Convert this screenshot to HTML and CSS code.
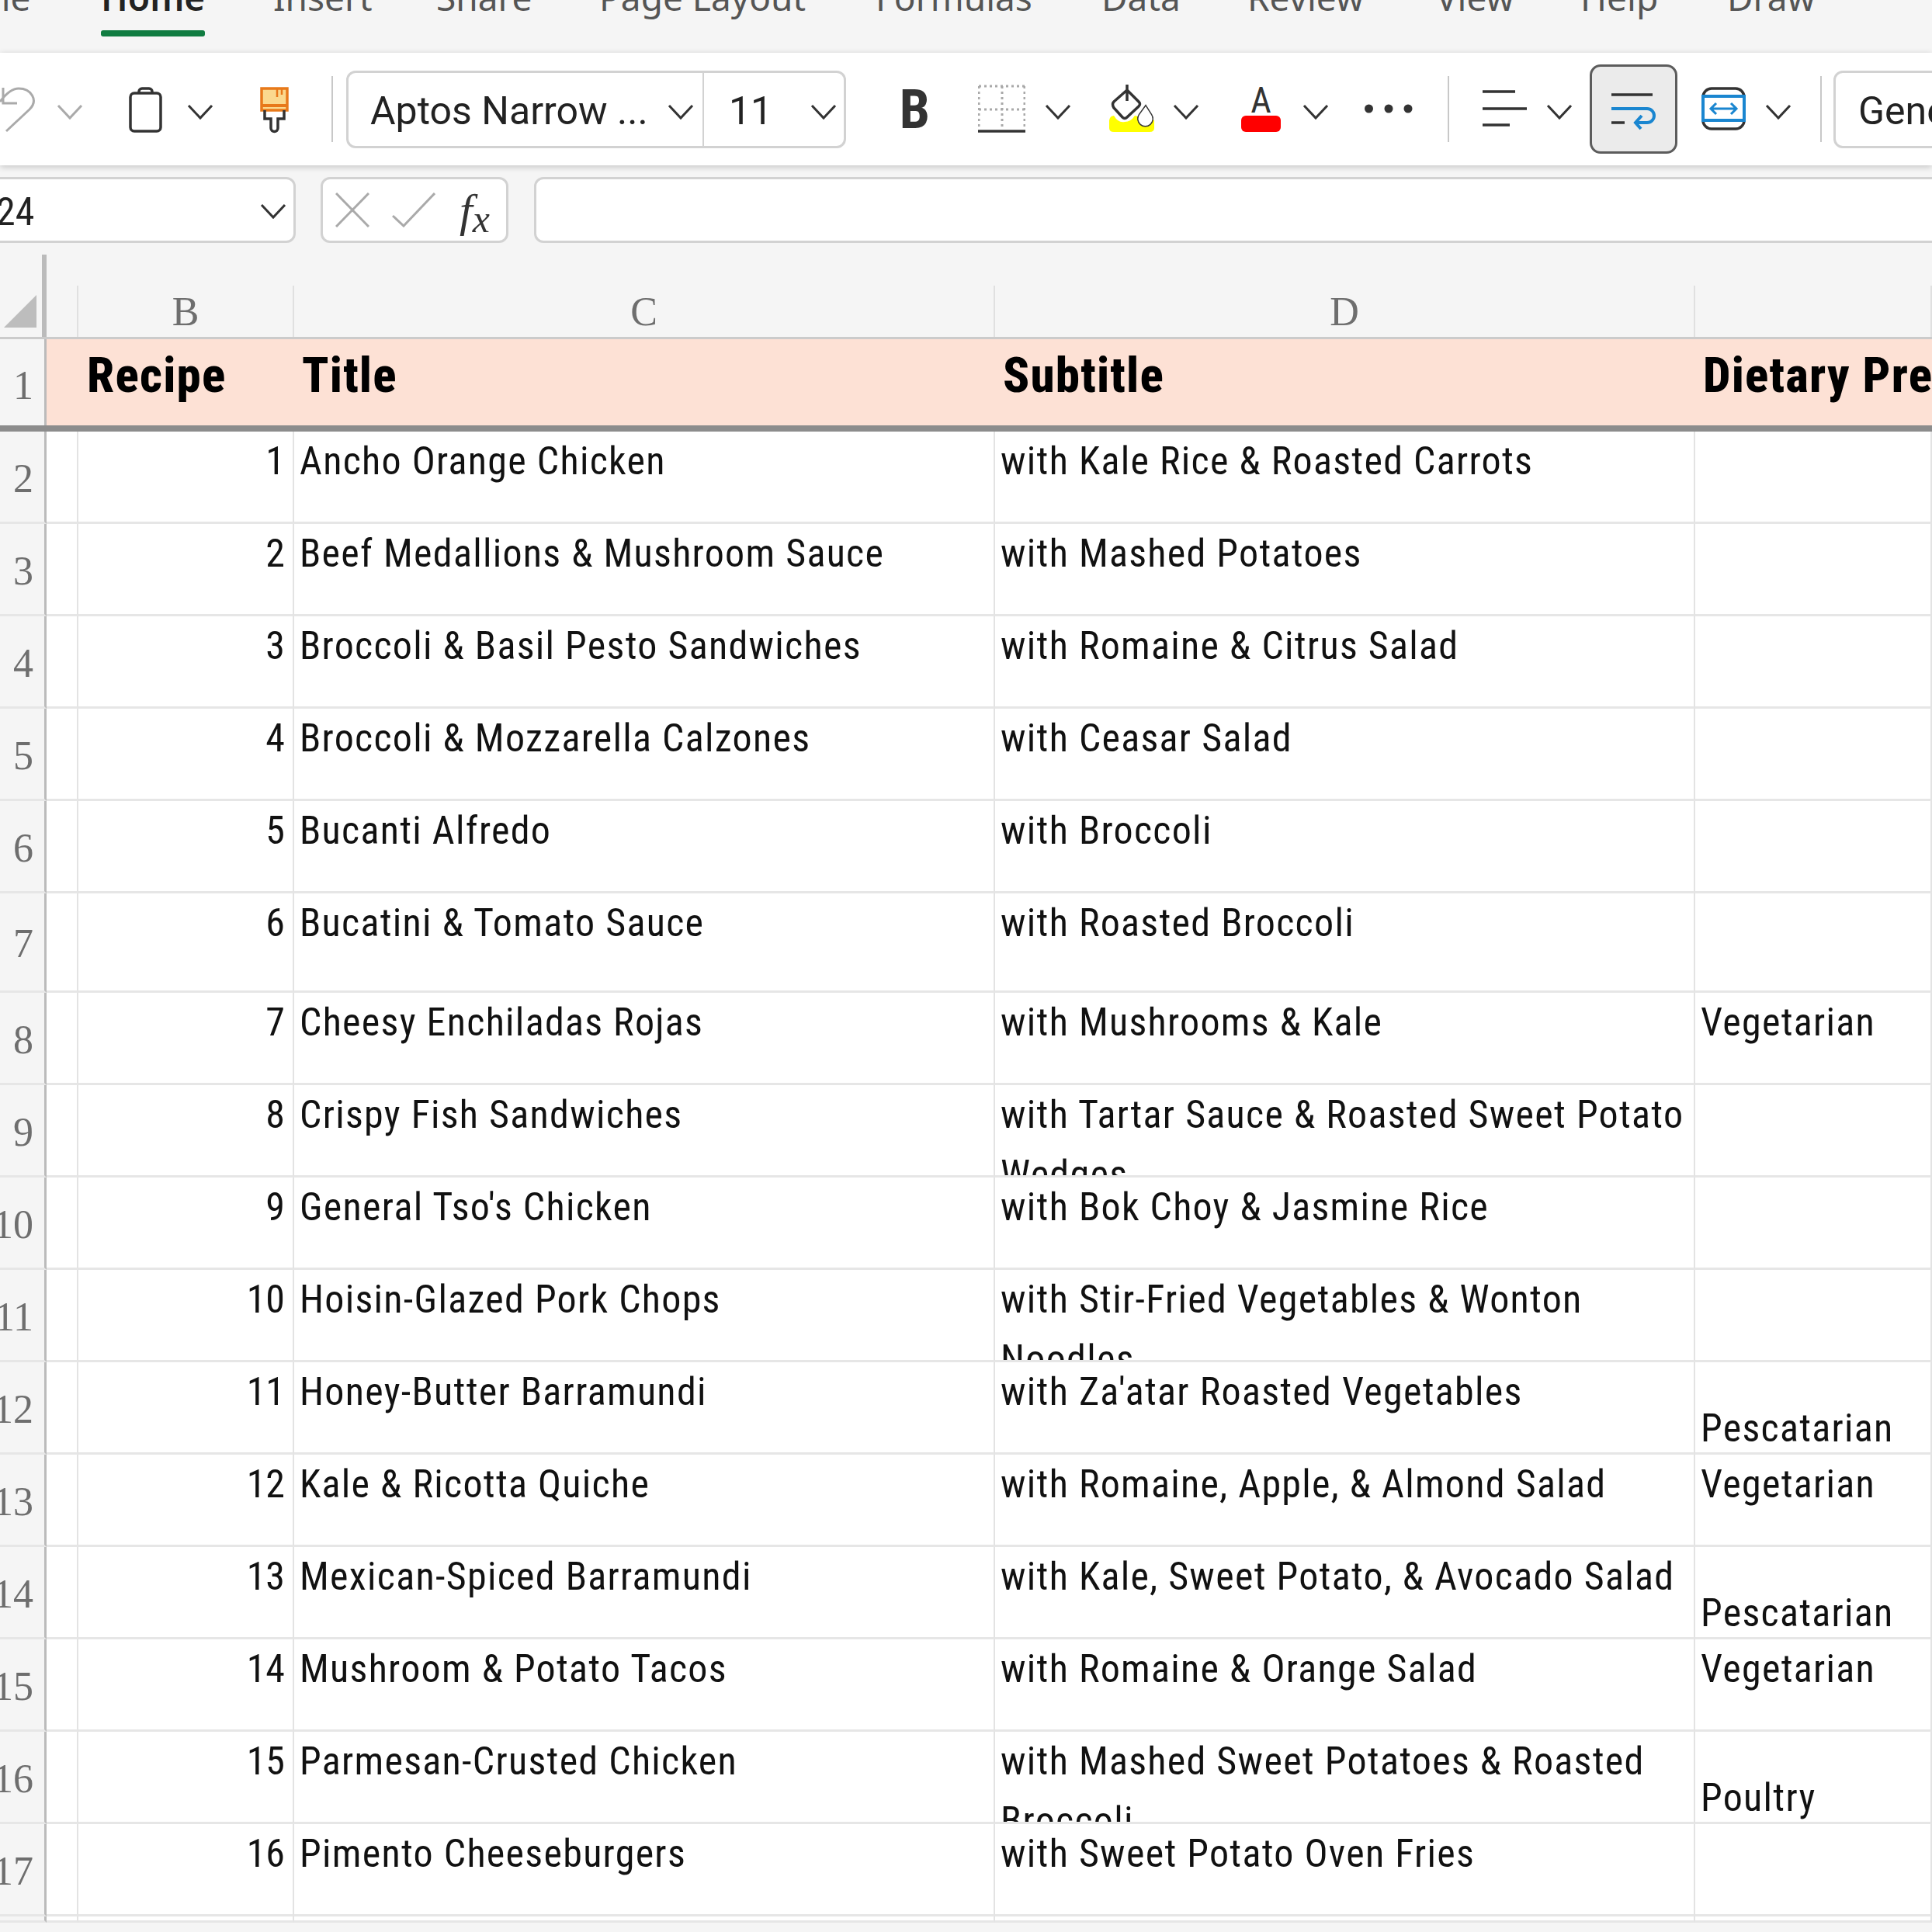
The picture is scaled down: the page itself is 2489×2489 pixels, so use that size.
FILE: index.html
```html
<!DOCTYPE html>
<html lang="en">
<head>
    <meta charset="UTF-8">
    <title>Recipes - Excel</title>
    <link rel="stylesheet" href="styles.css">
</head>
<body>
    <div class="tabs">
        <span class="tab tab-file">File</span>
        <span class="tab tab-home">Home</span>
        <span class="tab tab-insert">Insert</span>
        <span class="tab tab-share">Share</span>
        <span class="tab tab-layout">Page Layout</span>
        <span class="tab tab-formulas">Formulas</span>
        <span class="tab tab-data">Data</span>
        <span class="tab tab-review">Review</span>
        <span class="tab tab-view">View</span>
        <span class="tab tab-help">Help</span>
        <span class="tab tab-draw">Draw</span>
    </div>

    <div class="ribbon">
        <svg class="ico" width="47" height="64" viewBox="0 0 47 64"><path class="line-gray" d="M8 60 L38 32 C50 20 40 5 24 5 C14 5 6 14 0 22 M4 4 L4 24 L22 24"/></svg>
        <svg class="chev chev-gray ml-26" width="34" height="64" viewBox="0 0 34 64"><path d="M2 27 L17 43 L32 27"/></svg>
        <svg class="ico ml-59" width="43" height="64" viewBox="0 0 43 64"><rect class="line-dark" x="2" y="11" width="39" height="49" rx="5"/><path class="line-dark" d="M13 11 V9 a4 4 0 0 1 4 -4 h9 a4 4 0 0 1 4 4 V11"/></svg>
        <svg class="chev ml-32" width="34" height="64" viewBox="0 0 34 64"><path d="M2 27 L17 43 L32 27"/></svg>
        <svg class="ico ml-60" width="37" height="64" viewBox="0 0 37 64"><rect x="2" y="5" width="33" height="28" fill="#fbd98e" stroke="#e8791a" stroke-width="3.5"/><path d="M2 27 H35" stroke="#e8791a" stroke-width="4"/><path d="M22 6 V16 M28 6 V13" stroke="#e8791a" stroke-width="2.5"/><path class="line-dark" d="M6 33 V44 H14 V56 a4.5 4.5 0 0 0 9 0 V44 H31 V33"/></svg>
        <div class="sep ml-55"></div>

        <div class="combo font-combo ml-17">
            <div class="combo-part font-name">
                <span>Aptos Narrow ...</span>
                <svg class="chev" width="36" height="64" viewBox="0 0 34 64"><path d="M2 27 L17 43 L32 27"/></svg>
            </div>
            <div class="combo-part font-size">
                <span>11</span>
                <svg class="chev" width="34" height="64" viewBox="0 0 34 64"><path d="M2 27 L17 43 L32 27"/></svg>
            </div>
        </div>

        <span class="bold-btn ml-72">B</span>
        <svg class="ico ml-65" width="61" height="64" viewBox="0 0 61 64"><path d="M1 2 H60 M1 32 H60 M1 2 V56 M31 2 V56 M60 2 V56" fill="none" stroke="#a9a9a9" stroke-width="3" stroke-dasharray="3 4"/><path class="line-dark" d="M0 60 H61"/></svg>
        <svg class="chev ml-25" width="34" height="64" viewBox="0 0 34 64"><path d="M2 27 L17 43 L32 27"/></svg>
        <svg class="ico ml-49" width="58" height="64" viewBox="0 0 58 64">
            <path d="M0 46 Q1 40 6 40 Q12 50 20 48 Q28 48 33 40 L58 46 V56 Q58 61 52 61 H6 Q0 61 0 56 Z" fill="#ffff00"/>
            <path class="line-dark" d="M23 0 V21 M23 7 L38 22 Q41 25 38 28 L23 42 Q20 45 17 42 L6 30 Q3 25 6 22 L23 7"/>
            <path class="line-dark halo" d="M47 28 L54 39 A9 9 0 1 1 39 39 Z"/>
        </svg>
        <svg class="chev ml-24" width="34" height="64" viewBox="0 0 34 64"><path d="M2 27 L17 43 L32 27"/></svg>
        <svg class="ico ml-54" width="51" height="64" viewBox="0 0 51 64"><text class="icon-letter" x="25.5" y="36" text-anchor="middle">A</text><rect x="0" y="40" width="51" height="21" rx="6" fill="#ff0000"/></svg>
        <svg class="chev ml-28" width="34" height="64" viewBox="0 0 34 64"><path d="M2 27 L17 43 L32 27"/></svg>
        <svg class="ico ml-46" width="62" height="64" viewBox="0 0 62 64"><circle cx="5.5" cy="31" r="5.5" fill="#333"/><circle cx="31" cy="31" r="5.5" fill="#333"/><circle cx="56" cy="31" r="5.5" fill="#333"/></svg>
        <div class="sep ml-45"></div>
        <svg class="ico ml-43" width="57" height="64" viewBox="0 0 57 64"><path class="line-dark" d="M0 9 H42 M0 31 H57 M0 52 H35"/></svg>
        <svg class="chev ml-25" width="34" height="64" viewBox="0 0 34 64"><path d="M2 27 L17 43 L32 27"/></svg>
        <div class="wrap-btn ml-22">
            <svg class="ico" width="70" height="64" viewBox="0 0 70 64"><path class="line-dark" d="M6 13 H59 M6 49 H23"/><path class="line-blue" d="M6 31 H52 a9 9 0 0 1 0 18 H38 M45 40 L37 49 L44 57"/></svg>
        </div>
        <svg class="ico ml-31" width="57" height="64" viewBox="0 0 57 64"><rect class="line-dark" x="2" y="5" width="53" height="52" rx="11"/><rect class="line-blue merge-fill" x="2" y="15" width="53" height="31"/><path class="line-blue thin" d="M12 31 H45 M19 24 L12 31 L19 38 M38 24 L45 31 L38 38"/></svg>
        <svg class="chev ml-25" width="34" height="64" viewBox="0 0 34 64"><path d="M2 27 L17 43 L32 27"/></svg>
        <div class="sep ml-37"></div>
        <div class="combo format-combo ml-15"><div class="combo-part format-name"><span>General</span></div></div>
    </div>

    <div class="formula-bar">
        <div class="box name-box">
            <span>24</span>
            <svg class="chev" width="34" height="40" viewBox="0 0 34 40"><path d="M2 11 L17 27 L32 11"/></svg>
        </div>
        <div class="box fx-box">
            <svg class="ico" width="44" height="45" viewBox="0 0 44 45"><path class="line-gray" d="M1 1 L43 44 M43 1 L1 44"/></svg>
            <svg class="ico ml-29" width="56" height="45" viewBox="0 0 56 45"><path class="line-gray" d="M1 30 L15 43 L55 1"/></svg>
            <span class="fx-text">f<sub>x</sub></span>
        </div>
        <div class="box formula-input"></div>
    </div>

    <div class="sheet">
        <div class="col-head">
            <div class="corner"><svg width="42" height="42" viewBox="0 0 42 42"><path d="M42 0 V42 H0 Z" fill="#bdbdbd"/></svg></div>
            <div class="col-letter"></div>
            <div class="col-letter">B</div>
            <div class="col-letter">C</div>
            <div class="col-letter">D</div>
            <div class="col-letter"></div>
        </div>

        <div class="row row-title">
            <div class="rownum">1</div>
            <div class="title-cell"></div>
            <div class="title-cell title-recipe">Recipe<br>ID</div>
            <div class="title-cell">Title</div>
            <div class="title-cell">Subtitle</div>
            <div class="title-cell">Dietary Preferences</div>
        </div>

        <div class="row"><div class="rownum">2</div><div class="cell"></div><div class="cell num">1</div><div class="cell">Ancho Orange Chicken</div><div class="cell">with Kale Rice &amp; Roasted Carrots</div><div class="cell"></div></div>
        <div class="row"><div class="rownum">3</div><div class="cell"></div><div class="cell num">2</div><div class="cell">Beef Medallions &amp; Mushroom Sauce</div><div class="cell">with Mashed Potatoes</div><div class="cell"></div></div>
        <div class="row"><div class="rownum">4</div><div class="cell"></div><div class="cell num">3</div><div class="cell">Broccoli &amp; Basil Pesto Sandwiches</div><div class="cell">with Romaine &amp; Citrus Salad</div><div class="cell"></div></div>
        <div class="row"><div class="rownum">5</div><div class="cell"></div><div class="cell num">4</div><div class="cell">Broccoli &amp; Mozzarella Calzones</div><div class="cell">with Ceasar Salad</div><div class="cell"></div></div>
        <div class="row"><div class="rownum">6</div><div class="cell"></div><div class="cell num">5</div><div class="cell">Bucanti Alfredo</div><div class="cell">with Broccoli</div><div class="cell"></div></div>
        <div class="row row-tall"><div class="rownum">7</div><div class="cell"></div><div class="cell num">6</div><div class="cell">Bucatini &amp; Tomato Sauce</div><div class="cell">with Roasted Broccoli</div><div class="cell"></div></div>
        <div class="row"><div class="rownum">8</div><div class="cell"></div><div class="cell num">7</div><div class="cell">Cheesy Enchiladas Rojas</div><div class="cell">with Mushrooms &amp; Kale</div><div class="cell">Vegetarian</div></div>
        <div class="row"><div class="rownum">9</div><div class="cell"></div><div class="cell num">8</div><div class="cell">Crispy Fish Sandwiches</div><div class="cell">with Tartar Sauce &amp; Roasted Sweet Potato<br>Wedges</div><div class="cell"></div></div>
        <div class="row"><div class="rownum">10</div><div class="cell"></div><div class="cell num">9</div><div class="cell">General Tso's Chicken</div><div class="cell">with Bok Choy &amp; Jasmine Rice</div><div class="cell"></div></div>
        <div class="row"><div class="rownum">11</div><div class="cell"></div><div class="cell num">10</div><div class="cell">Hoisin-Glazed Pork Chops</div><div class="cell">with Stir-Fried Vegetables &amp; Wonton<br>Noodles</div><div class="cell"></div></div>
        <div class="row"><div class="rownum">12</div><div class="cell"></div><div class="cell num">11</div><div class="cell">Honey-Butter Barramundi</div><div class="cell">with Za'atar Roasted Vegetables</div><div class="cell cell-low">Pescatarian</div></div>
        <div class="row"><div class="rownum">13</div><div class="cell"></div><div class="cell num">12</div><div class="cell">Kale &amp; Ricotta Quiche</div><div class="cell">with Romaine, Apple, &amp; Almond Salad</div><div class="cell">Vegetarian</div></div>
        <div class="row"><div class="rownum">14</div><div class="cell"></div><div class="cell num">13</div><div class="cell">Mexican-Spiced Barramundi</div><div class="cell">with Kale, Sweet Potato, &amp; Avocado Salad</div><div class="cell cell-low">Pescatarian</div></div>
        <div class="row"><div class="rownum">15</div><div class="cell"></div><div class="cell num">14</div><div class="cell">Mushroom &amp; Potato Tacos</div><div class="cell">with Romaine &amp; Orange Salad</div><div class="cell">Vegetarian</div></div>
        <div class="row"><div class="rownum">16</div><div class="cell"></div><div class="cell num">15</div><div class="cell">Parmesan-Crusted Chicken</div><div class="cell">with Mashed Sweet Potatoes &amp; Roasted<br>Broccoli</div><div class="cell cell-low">Poultry</div></div>
        <div class="row"><div class="rownum">17</div><div class="cell"></div><div class="cell num">16</div><div class="cell">Pimento Cheeseburgers</div><div class="cell">with Sweet Potato Oven Fries</div><div class="cell"></div></div>
        <div class="row row-cut"><div class="rownum"></div><div class="cell"></div><div class="cell"></div><div class="cell"></div><div class="cell"></div><div class="cell"></div></div>
    </div>
</body>
</html>
```

FILE: styles.css
```css
* {
    box-sizing: border-box;
}
html, body {
    height: 2489px;
    overflow: hidden;
}
body {
    margin: 0;
    background-color: #f5f5f5;
    font-family: Roboto, "Liberation Sans", sans-serif;
    font-stretch: 75%;
    color: #111;
}

/* tabs, cut off by the top of the screen */
.tabs {
    height: 68px;
    position: relative;
    overflow: hidden;
    white-space: nowrap;
    font-family: "Noto Sans", sans-serif;
    font-stretch: 100%;
    font-size: 46px;
    line-height: 60px;
    color: #555;
}
.tab {
    position: absolute;
    top: -34px;
}
.tab-file { left: -34px; }
.tab-home { left: 130px; color: #222; font-weight: 600; }
.tab-home::after {
    content: "";
    position: absolute;
    left: 0;
    right: 0;
    top: 73px;
    height: 8px;
    border-radius: 3px;
    background-color: #107c41;
}
.tab-insert { left: 352px; }
.tab-share { left: 562px; }
.tab-layout { left: 772px; }
.tab-formulas { left: 1128px; }
.tab-data { left: 1419px; }
.tab-review { left: 1607px; }
.tab-view { left: 1850px; }
.tab-help { left: 2036px; }
.tab-draw { left: 2225px; }

/* ribbon */
.ribbon {
    height: 145px;
    display: flex;
    align-items: center;
    background-color: white;
    overflow: hidden;
    box-shadow: 0 2px 8px rgba(0, 0, 0, 0.2);
    position: relative;
}
.ribbon > * {
    flex-shrink: 0;
}
.ml-15 { margin-left: 15px; }
.ml-17 { margin-left: 17px; }
.ml-22 { margin-left: 22px; }
.ml-24 { margin-left: 24px; }
.ml-25 { margin-left: 25px; }
.ml-26 { margin-left: 26px; }
.ml-28 { margin-left: 28px; }
.ml-29 { margin-left: 29px; }
.ml-31 { margin-left: 31px; }
.ml-32 { margin-left: 32px; }
.ml-37 { margin-left: 37px; }
.ml-43 { margin-left: 43px; }
.ml-45 { margin-left: 45px; }
.ml-46 { margin-left: 46px; }
.ml-49 { margin-left: 49px; }
.ml-54 { margin-left: 54px; }
.ml-55 { margin-left: 55px; }
.ml-59 { margin-left: 59px; }
.ml-60 { margin-left: 60px; }
.ml-65 { margin-left: 65px; }
.ml-72 { margin-left: 72px; }

.ico {
    display: block;
    flex-shrink: 0;
}
.chev {
    display: block;
    flex-shrink: 0;
}
.chev path {
    fill: none;
    stroke: #333;
    stroke-width: 3;
}
.chev-gray path {
    stroke: #aaa;
}
.line-dark {
    fill: none;
    stroke: #333;
    stroke-width: 3.5;
}
.line-gray {
    fill: none;
    stroke: #aaa;
    stroke-width: 3;
}
.line-blue {
    fill: none;
    stroke: #1a86d0;
    stroke-width: 4;
}
.line-blue.thin {
    stroke-width: 3;
}
.merge-fill {
    fill: white;
}
.halo {
    stroke-width: 3;
    fill: white;
    paint-order: stroke;
}
.icon-letter {
    font-size: 46px;
    fill: #333;
}
.sep {
    width: 2px;
    height: 85px;
    background-color: #c8c8c8;
}
.combo {
    height: 100px;
    display: flex;
    border: 3px solid #d2d2d2;
    border-radius: 12px;
    font-size: 50px;
    font-stretch: 100%;
    color: #222;
}
.combo-part {
    display: flex;
    align-items: center;
    justify-content: space-between;
}
.combo-part span {
    padding-top: 4px;
}
.font-combo {
    width: 644px;
}
.font-name {
    width: 458px;
    padding: 0 10px 0 28px;
    border-right: 2px solid #d2d2d2;
}
.font-size {
    flex: 1;
    padding: 0 9px 0 32px;
}
.format-combo {
    width: 300px;
}
.format-name {
    padding-left: 29px;
}
.bold-btn {
    width: 33px;
    display: flex;
    justify-content: center;
    font-size: 70px;
    font-weight: 700;
    color: #333;
}
.wrap-btn {
    width: 113px;
    height: 115px;
    display: flex;
    align-items: center;
    justify-content: center;
    background-color: #ebebeb;
    border: 3px solid #5c5c5c;
    border-radius: 14px;
}

/* name box and formula input */
.formula-bar {
    height: 115px;
    padding-top: 15px;
    display: flex;
    align-items: flex-start;
}
.box {
    height: 85px;
    flex-shrink: 0;
    display: flex;
    align-items: center;
    background-color: white;
    border: 3px solid #d2d2d2;
    border-radius: 12px;
    font-size: 50px;
    color: #222;
}
.name-box {
    width: 401px;
    margin-left: -20px;
    padding: 4px 9px 0 12px;
    justify-content: space-between;
}
.fx-box {
    width: 242px;
    margin-left: 32px;
    padding-left: 16px;
}
.fx-text {
    margin-left: 31px;
    font-family: "Liberation Serif", serif;
    font-style: italic;
    font-size: 60px;
    line-height: 56px;
    color: #333;
}
.fx-text sub {
    font-size: 50px;
    line-height: 0;
    vertical-align: -8px;
}
.formula-input {
    width: 2000px;
    margin-left: 33px;
}

/* sheet */
.sheet {
    background-color: white;
}
.col-head, .row {
    display: grid;
    grid-template-columns: 60px 41px 278px 903px 902px 305px;
}
.col-head {
    height: 109px;
    background-color: #f5f5f5;
    border-bottom: 3px solid #cbcbcb;
}
.corner {
    border-right: 6px solid #bbb;
    padding: 52px 0 0 5px;
}
.corner svg {
    display: block;
}
.col-letter {
    margin-top: 40px;
    display: flex;
    align-items: center;
    justify-content: center;
    border-right: 2px solid #e0e0e0;
    font-family: "Liberation Serif", serif;
    font-stretch: 100%;
    font-size: 52px;
    color: #6e6e6e;
}
.row {
    height: 119px;
    overflow: hidden;
    font-size: 50px;
    line-height: 77px;
    letter-spacing: 1.3px;
}
.row-tall {
    height: 128px;
}
.row-cut {
    height: 8px;
}
.row-title {
    background-color: #fde1d5;
    border-bottom: 8px solid #8c8c8c;
}
.rownum {
    display: flex;
    align-items: center;
    justify-content: flex-end;
    padding: 4px 14px 0 0;
    overflow: hidden;
    white-space: nowrap;
    background-color: #f5f5f5;
    border-right: 3px solid #bbb;
    border-bottom: 3px solid #e6e6e6;
    font-family: "Liberation Serif", serif;
    font-stretch: 100%;
    font-size: 52px;
    letter-spacing: 0;
    color: #6e6e6e;
}
.row-title .rownum {
    border-bottom: none;
    padding-top: 8px;
}
.cell {
    overflow: hidden;
    padding: 0 7px;
    border-right: 2px solid #e3e3e3;
    border-bottom: 3px solid #e6e6e6;
}
.cell.num {
    text-align: right;
    padding-right: 10px;
    letter-spacing: 0;
}
.cell-low {
    padding-top: 47px;
}
.title-cell {
    overflow: hidden;
    white-space: nowrap;
    padding: 2px 0 0 10px;
    font-size: 63px;
    font-weight: 800;
    line-height: 90px;
    letter-spacing: 1.2px;
    color: #000;
}
.title-recipe {
    padding-left: 11px;
}
```
